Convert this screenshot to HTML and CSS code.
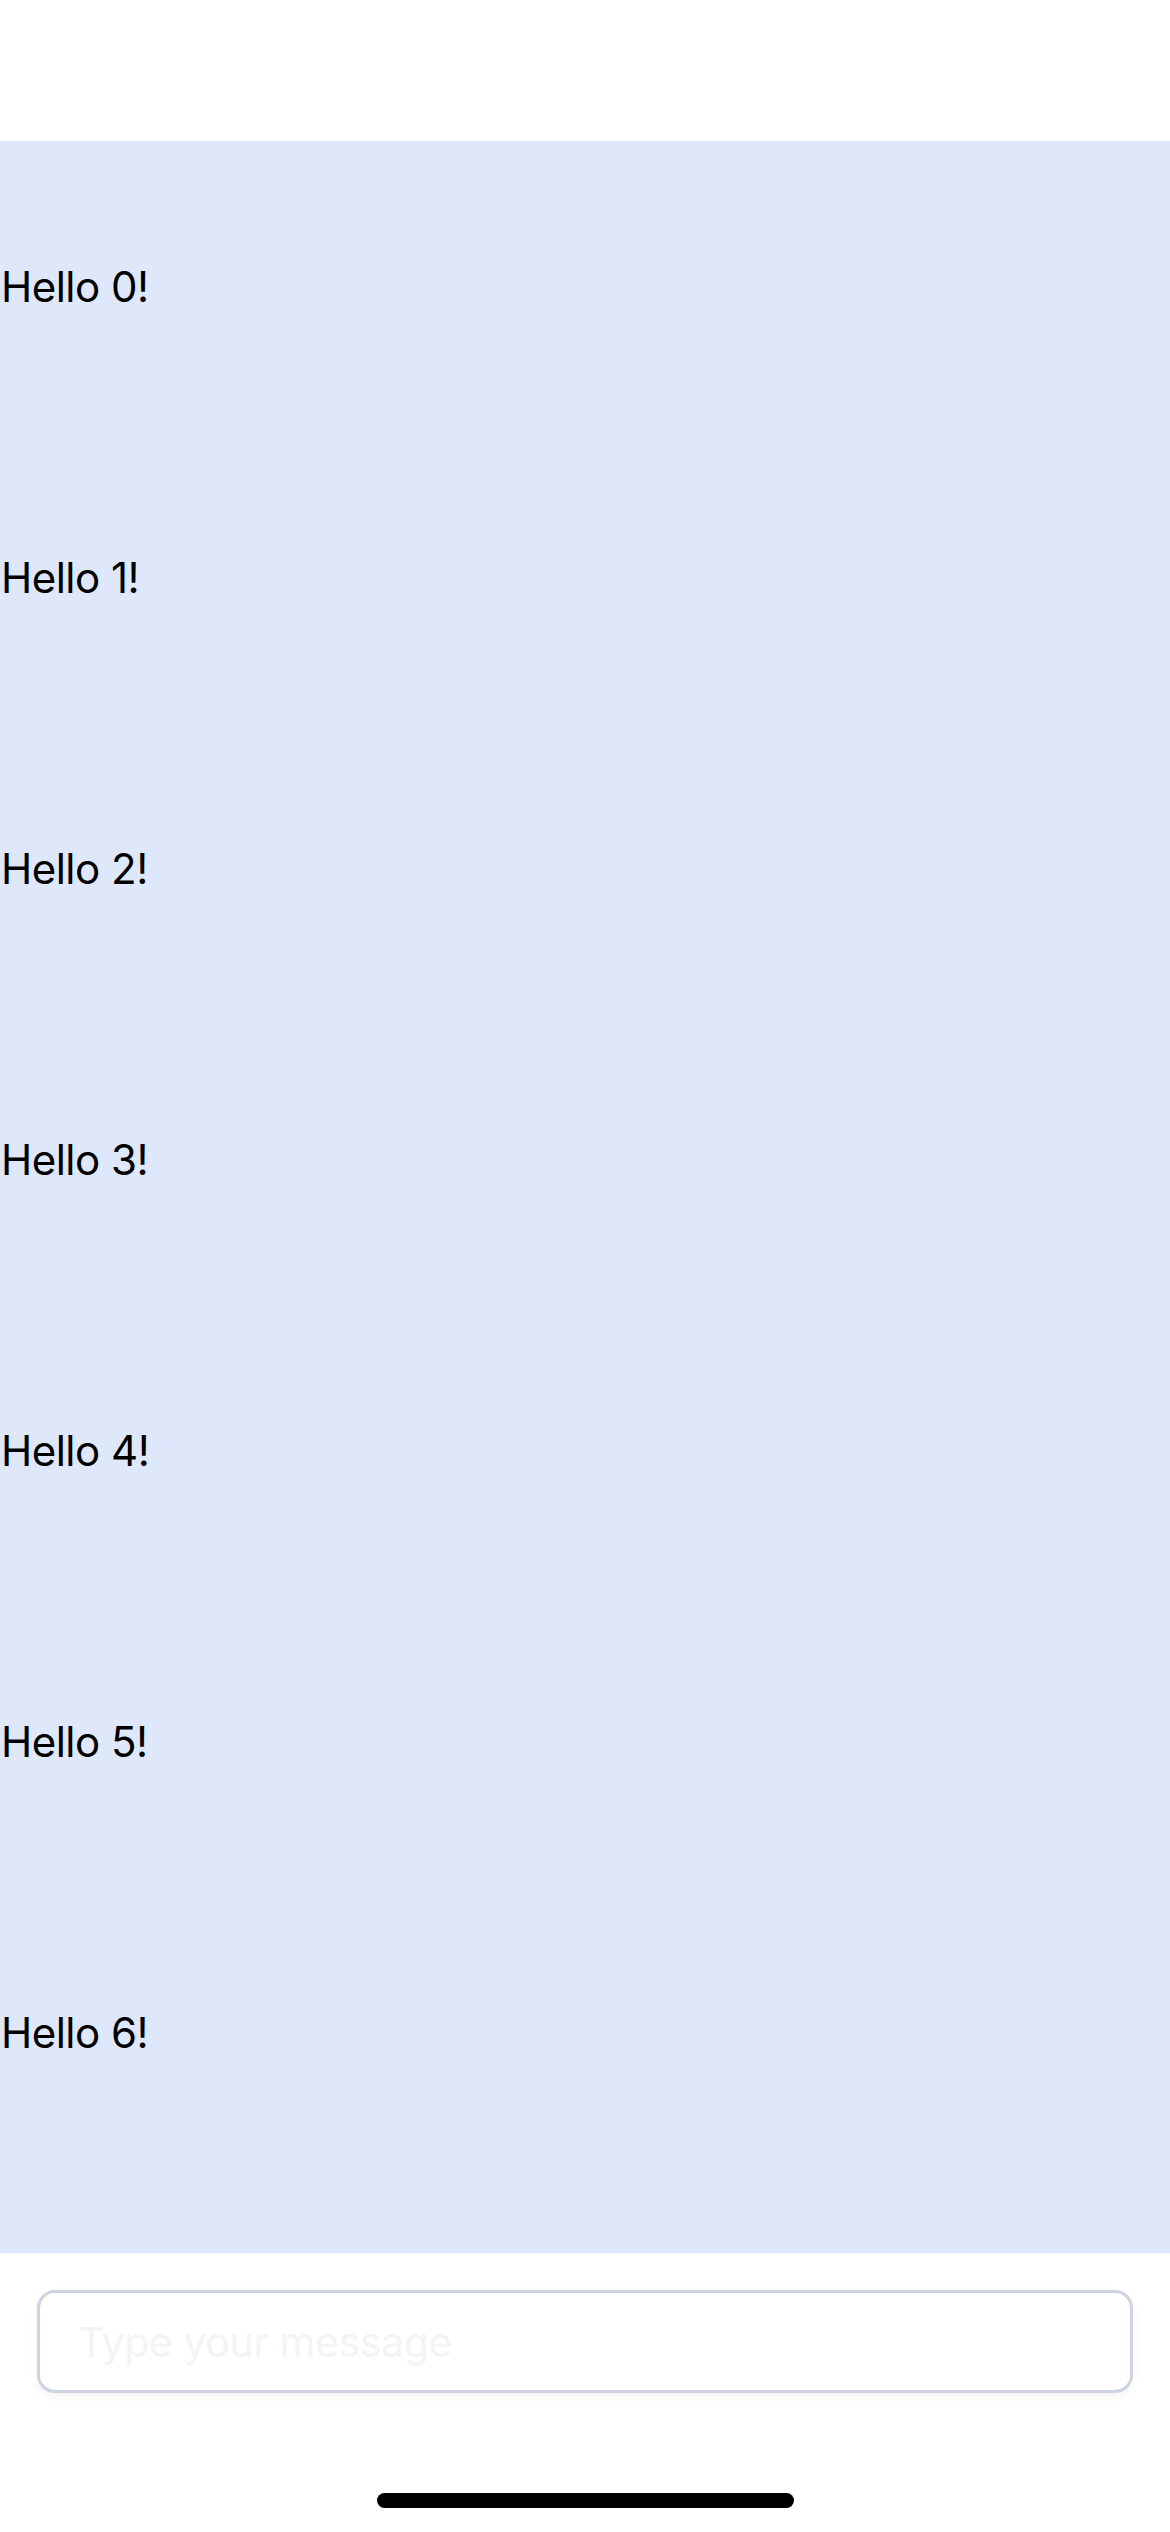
FILE: index.html
```html
<!DOCTYPE html>
<html lang="en">
<head>
<meta charset="utf-8">
<title>Chat</title>
<link rel="stylesheet" href="styles.css">
</head>
<body>
<div class="app">
  <div class="top"></div>
  <div class="messages">
    <div class="msg">Hello 0!</div>
    <div class="msg">Hello 1!</div>
    <div class="msg">Hello 2!</div>
    <div class="msg">Hello 3!</div>
    <div class="msg">Hello 4!</div>
    <div class="msg">Hello 5!</div>
    <div class="msg">Hello 6!</div>
  </div>
  <div class="composer">
    <input class="input" type="text" placeholder="Type your message">
  </div>
</div>
<div class="home-indicator"></div>
</body>
</html>
```

FILE: styles.css
```css
html, body {
  margin: 0;
  padding: 0;
  background: #ffffff;
}
body {
  font-family: Inter, "Liberation Sans", sans-serif;
  color: #000000;
  width: 1170px;
  height: 2532px;
  position: relative;
  overflow: hidden;
}
.app {
  display: flex;
  flex-direction: column;
}
.top {
  height: 141px;
}
.messages {
  height: 2112px;
  background: #dee8fa;
  display: flex;
  flex-direction: column;
}
.msg {
  height: 291px;
  display: flex;
  align-items: center;
  font-size: 42px;
  letter-spacing: -0.5px;
  padding-left: 1px;
}
.composer {
  padding: 37px 37px 0 37px;
}
.input {
  box-sizing: border-box;
  width: 100%;
  height: 103px;
  border: 3px solid #cdd3e1;
  border-radius: 18px;
  background: #ffffff;
  box-shadow: 0 3px 10px rgba(0, 0, 0, 0.05);
  padding: 0 38px;
  font-family: Inter, "Liberation Sans", sans-serif;
  font-size: 41px;
  letter-spacing: -0.4px;
  outline: none;
  margin: 0;
}
.input::placeholder {
  color: #f3f4f6;
}
.home-indicator {
  position: absolute;
  left: 377px;
  top: 2493px;
  width: 417px;
  height: 15px;
  border-radius: 8px;
  background: #000000;
}
```
